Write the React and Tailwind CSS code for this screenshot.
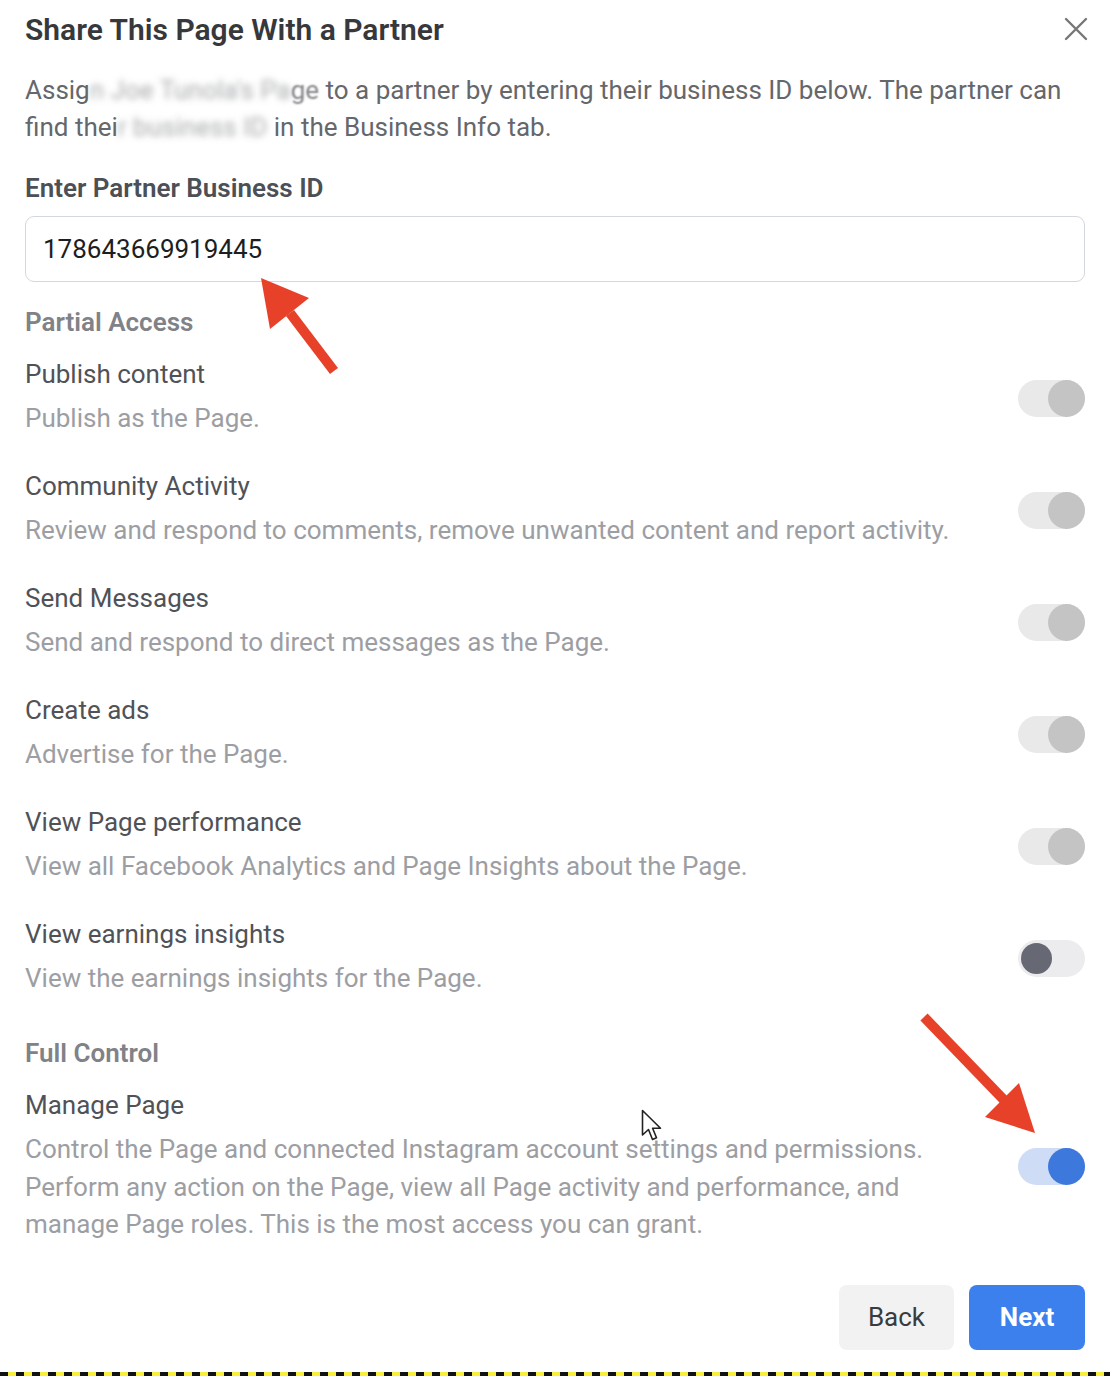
import { useState } from 'react';

const permissions = [
  { title: 'Publish content', desc: 'Publish as the Page.', state: 'locked' },
  {
    title: 'Community Activity',
    desc: 'Review and respond to comments, remove unwanted content and report activity.',
    state: 'locked',
  },
  { title: 'Send Messages', desc: 'Send and respond to direct messages as the Page.', state: 'locked' },
  { title: 'Create ads', desc: 'Advertise for the Page.', state: 'locked' },
  {
    title: 'View Page performance',
    desc: 'View all Facebook Analytics and Page Insights about the Page.',
    state: 'locked',
  },
  { title: 'View earnings insights', desc: 'View the earnings insights for the Page.', state: 'off' },
];

function Toggle({ state }) {
  if (state === 'on') {
    return (
      <div className="w-[67px] h-[37px] rounded-full bg-[#cfdcf6] flex items-center justify-end shrink-0">
        <div className="w-[37px] h-[37px] rounded-full bg-[#3d78dc]" />
      </div>
    );
  }
  if (state === 'off') {
    return (
      <div className="w-[67px] h-[37px] rounded-full bg-[#ececee] flex items-center pl-[3px] shrink-0">
        <div className="w-[31px] h-[31px] rounded-full bg-[#666874]" />
      </div>
    );
  }
  return (
    <div className="w-[67px] h-[37px] rounded-full bg-[#e9e9e9] flex items-center justify-end shrink-0">
      <div className="w-[37px] h-[37px] rounded-full bg-[#c4c4c4]" />
    </div>
  );
}

function PermissionRow({ title, desc, state }) {
  return (
    <div className="flex items-center justify-between">
      <div className="w-[940px]">
        <div className="text-[26px] leading-[30px] text-[#505257]">{title}</div>
        <div className="mt-[11px] text-[26px] leading-[37.5px] text-[#9c9ea3]">{desc}</div>
      </div>
      <Toggle state={state} />
    </div>
  );
}

export default function App() {
  const [partnerId, setPartnerId] = useState('178643669919445');

  return (
    <div className="relative w-[1110px] h-[1376px] bg-white overflow-hidden font-['Roboto',sans-serif]">
      <div className="px-[25px] pt-[12px]">
        {/* Header */}
        <div className="flex items-center justify-between">
          <h2 className="text-[30px] leading-[36px] font-semibold text-[#36383c]">
            Share This Page With a Partner
          </h2>
          <button type="button" className="mr-[-3px] mt-[-3px] text-[#777]">
            <svg width="24" height="24" viewBox="0 0 24 24" fill="none" stroke="currentColor" strokeWidth="2.4" strokeLinecap="round">
              <path d="M2 2 L22 22 M22 2 L2 22" />
            </svg>
          </button>
        </div>

        {/* Intro, page name is blurred out in the source */}
        <p className="mt-[24px] w-[1040px] text-[26px] leading-[37px] text-[#65676b]">
          Assig<span className="text-transparent [text-shadow:0_0_6px_rgba(101,103,107,0.55)]">n Joe Tunola's Pa</span>
          <span className="text-transparent [text-shadow:0_0_2px_rgba(101,103,107,0.8)]">ge</span> to a partner by entering their business ID below. The partner can
          find thei<span className="text-transparent [text-shadow:0_0_6px_rgba(101,103,107,0.55)]">r business ID</span> in the Business Info tab.
        </p>

        {/* Partner id */}
        <div className="mt-[27px] text-[26px] leading-[30px] font-semibold text-[#4b4f56]">
          Enter Partner Business ID
        </div>
        <input
          type="text"
          value={partnerId}
          onChange={(e) => setPartnerId(e.target.value)}
          className="mt-[13px] w-full h-[66px] px-[17px] rounded-[9px] border border-[#d3d8e0] text-[26px] text-[#1c1e21] outline-none"
        />

        {/* Partial access */}
        <div className="mt-[25px] text-[26px] leading-[30px] font-semibold text-[#808288]">Partial Access</div>
        <div className="mt-[22px] flex flex-col gap-[33.5px]">
          {permissions.map((p) => (
            <PermissionRow key={p.title} {...p} />
          ))}
        </div>

        {/* Full control */}
        <div className="mt-[40.5px] text-[26px] leading-[30px] font-semibold text-[#808288]">Full Control</div>
        <div className="mt-[22px]">
          <PermissionRow
            title="Manage Page"
            desc="Control the Page and connected Instagram account settings and permissions. Perform any action on the Page, view all Page activity and performance, and manage Page roles. This is the most access you can grant."
            state="on"
          />
        </div>

        {/* Footer buttons */}
        <div className="mt-[41.5px] flex justify-end gap-[15px]">
          <button type="button" className="w-[115px] h-[65px] rounded-[8px] bg-[#f2f2f2] text-[26px] text-[#3a3b3e]">
            Back
          </button>
          <button type="button" className="w-[116px] h-[65px] rounded-[8px] bg-[#3b80ec] text-[26px] font-bold text-white">
            Next
          </button>
        </div>
      </div>

      {/* dashed selection edge */}
      <div className="absolute left-0 right-0 bottom-0 h-[4px] bg-[repeating-linear-gradient(90deg,#111_0_8px,#f7ef3a_8px_16px)]" />

      {/* Annotation arrows */}
      <svg className="absolute left-0 top-0 pointer-events-none" width="1110" height="1376" viewBox="0 0 1110 1376">
        <line x1="334" y1="371" x2="290" y2="313" stroke="#e8412a" strokeWidth="10" />
        <polygon points="261,278 309,298 270,329" fill="#e8412a" />
        <line x1="924" y1="1017" x2="1004" y2="1100" stroke="#e8412a" strokeWidth="10" />
        <polygon points="1035,1133 985,1117 1019,1083" fill="#e8412a" />
      </svg>

      {/* Mouse cursor */}
      <svg className="absolute left-[641px] top-[1109px] pointer-events-none" width="24" height="36" viewBox="0 0 24 36">
        <path
          d="M1.5 1.5 L1.5 26 L7.5 20.5 L11.5 30.5 L15.5 28.8 L11.6 19.2 L19.5 19.2 Z"
          fill="white"
          stroke="#222"
          strokeWidth="1.6"
          strokeLinejoin="round"
        />
      </svg>
    </div>
  );
}
